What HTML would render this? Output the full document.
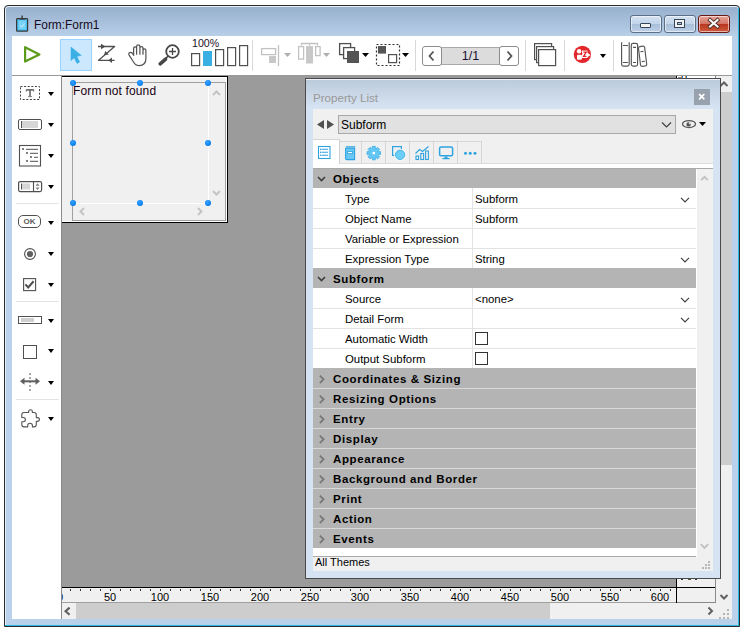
<!DOCTYPE html>
<html><head><meta charset="utf-8">
<style>
*{margin:0;padding:0;box-sizing:border-box}
html,body{width:748px;height:633px;overflow:hidden;background:#fff;font-family:"Liberation Sans",sans-serif;color:#000}
.a{position:absolute}
#win{left:4px;top:5px;width:736px;height:622px;border:1px solid #2b2b2b;border-radius:4px 4px 0 0;background:#b9d1ea;box-shadow:inset 1px 1px 0 #e8eef6}
#title{left:6px;top:7px;width:732px;height:29px;border-radius:3px 3px 0 0;background:linear-gradient(#97b0cd,#b8cfe8)}
#cyanR{left:738px;top:8px;width:1px;height:618px;background:#29b8e6}
#cyanB{left:5px;top:625px;width:734px;height:1px;background:#29b8e6}
.tbtn{top:15px;width:32px;height:18px;border:1px solid #5b6f86;border-radius:3px;background:linear-gradient(#d4e2f2 0%,#c2d4ea 50%,#a9bfd9 51%,#bcd0e8 100%);box-shadow:inset 0 0 0 1px rgba(255,255,255,.55)}
#toolbar{left:12px;top:36px;width:720px;height:39px;background:#fff}
#tbline{left:12px;top:75px;width:720px;height:1px;background:#9a9a9a}
#palette{left:12px;top:76px;width:49px;height:543px;background:#fff}
#palbr{left:61px;top:76px;width:1px;height:527px;background:#8a8a8a}
#canvas{left:62px;top:76px;width:614px;height:511px;background:#9b9b9b}
.sep{background:#d8d8d8;width:1px;height:31px;top:40px}
.dd{width:0;height:0;border-left:3.75px solid transparent;border-right:3.75px solid transparent;border-top:4px solid #000}
.psep{left:16px;width:43px;height:1px;background:#e3e3e3}
.txt{white-space:nowrap;line-height:1}
</style></head><body>
<div class="a" id="win"></div>
<div class="a" id="title"></div>
<div class="a" id="cyanR"></div>
<div class="a" id="cyanB"></div>
<!-- title icon -->
<svg class="a" style="left:15px;top:15px" width="15" height="17"><rect x="1.6" y="3.6" width="11" height="12.6" rx="0.8" fill="#47bdf2" stroke="#3a3a3a" stroke-width="1.2"/><rect x="3.5" y="5.5" width="7.2" height="8.8" fill="#79d2f7"/><path d="M4.3 3.8 L9.9 3.8" stroke="#3a3a3a" stroke-width="1.6"/><path d="M7.1 0.5 L7.1 3.5" stroke="#3a3a3a" stroke-width="1.4"/><path d="M4.8 10.2 L6.6 12 L9.6 8.6" fill="none" stroke="#d8f2fc" stroke-width="0.9"/></svg>
<div class="a txt" style="left:34px;top:20px;font-size:11.9px;color:#1a0a1e">Form:Form1</div>
<div class="a tbtn" style="left:630px"></div>
<div class="a tbtn" style="left:664px"></div>
<div class="a tbtn" style="left:698px;border-color:#6a1a14;background:linear-gradient(#e8a496 0%,#d27565 50%,#b9361f 51%,#cf5b3e 100%)"></div>
<div class="a" style="left:640px;top:23px;width:11px;height:5px;background:#f4f4f4;border:1px solid #34465a;border-radius:1px"></div>
<svg class="a" style="left:673px;top:18px" width="13" height="11"><rect x="1.5" y="1.5" width="10" height="8" fill="#f2f2f2" stroke="#34465a" stroke-width="1"/><rect x="4.5" y="4.5" width="4" height="2" fill="#b8c8da" stroke="#34465a" stroke-width="1"/></svg>
<svg class="a" style="left:706px;top:17px" width="16" height="12"><path d="M4 3 L11.5 9.5 M11.5 3 L4 9.5" stroke="#4a2a24" stroke-width="3.8" stroke-linecap="square"/><path d="M4 3 L11.5 9.5 M11.5 3 L4 9.5" stroke="#fafafa" stroke-width="2.2" stroke-linecap="square"/></svg>

<div class="a" id="toolbar"></div>
<div class="a" id="tbline"></div>

<!-- toolbar icons -->
<svg class="a" style="left:20px;top:42px" width="24" height="25"><path d="M5.1 5.2 L19.4 12.4 L5.1 19.6 Z" fill="none" stroke="#5b9a1a" stroke-width="2.2" stroke-linejoin="round"/></svg>
<div class="a" style="left:60px;top:39px;width:32px;height:32px;background:#cce8ff;border:1px solid #99d1ff"></div>
<svg class="a" style="left:60px;top:39px" width="32" height="32"><path d="M11 8 L21.3 16.5 L16.8 17.3 L19.6 23 L17 24.4 L14.2 18.7 L11 21.6 Z" fill="#3cb0e4" stroke="#3cb0e4" stroke-width="0.6" stroke-linejoin="round"/></svg>
<svg class="a" style="left:96px;top:42px" width="22" height="22"><g stroke="#505050" stroke-width="1.3" fill="none" stroke-linejoin="round"><path d="M2 4.5 L18.6 4.5 L2.6 18.3 L18.6 18.3"/></g><g fill="#505050"><path d="M5 1.8 L9.5 4.5 L5 7.2 Z"/><path d="M16 15.6 L12.3 18.3 L16 21 Z"/><path d="M8 13.3 L9.2 8.9 L12.9 12.5 Z"/></g></svg>
<svg class="a" style="left:127px;top:42px" width="22" height="26"><path d="M6.6 13 L6.6 6.3 Q6.6 4.8 8.1 4.8 Q9.6 4.8 9.6 6.3 L9.6 12.2 M9.6 6.3 L9.6 4.4 Q9.6 2.9 11.25 2.9 Q12.9 2.9 12.9 4.4 L12.9 12.2 M12.9 6 Q12.9 4.6 14.45 4.6 Q16 4.6 16 6 L16 12.2 M16 8.4 Q16 6.9 17.45 6.9 Q18.9 6.9 18.9 8.4 L18.9 16.5 Q18.9 23.5 12.2 23.6 Q8.5 23.6 6.5 20 L2.0 12.8 Q1.3 11.2 2.8 10.6 Q4.4 10.0 5.6 11.6 L6.8 13.3" fill="none" stroke="#555" stroke-width="1.25" stroke-linejoin="round" stroke-linecap="round"/></svg>
<svg class="a" style="left:156px;top:42px" width="28" height="26"><circle cx="16.5" cy="9.5" r="6.3" fill="none" stroke="#474747" stroke-width="1.8"/><path d="M16.5 6 L16.5 13 M13 9.5 L20 9.5" stroke="#474747" stroke-width="1.3"/><path d="M12.4 13.8 L9 17" stroke="#474747" stroke-width="1.6"/><path d="M9.6 17.2 L4.2 21.9" stroke="#474747" stroke-width="3.6" stroke-linecap="round"/></svg>
<div class="a txt" style="left:192px;top:38px;font-size:10.6px;color:#1c1028">100%</div>
<svg class="a" style="left:190px;top:44px" width="60" height="23"><g fill="none" stroke="#505050" stroke-width="1.2"><rect x="1.6" y="9.6" width="8" height="12"/><rect x="25.6" y="5.6" width="8" height="16"/><rect x="37.6" y="3.6" width="8" height="18"/><rect x="49.6" y="1.6" width="8" height="20"/></g><rect x="13" y="7" width="9" height="15" fill="#3aafe3"/></svg>
<div class="a sep" style="left:252px"></div>
<svg class="a" style="left:258px;top:42px" width="36" height="26"><rect x="3.6" y="6.6" width="14" height="6" fill="none" stroke="#c2c2c2" stroke-width="1.3"/><rect x="11" y="14" width="7" height="7" fill="#c8c8c8"/><path d="M20.5 3 L20.5 24" stroke="#c2c2c2" stroke-width="1.3"/><path d="M26 11 L33 11 L29.5 15 Z" fill="#b0b0b0"/></svg>
<svg class="a" style="left:296px;top:40px" width="38" height="28"><g fill="none" stroke="#c2c2c2" stroke-width="1.3"><path d="M5.5 5.5 L5.5 3.5 L21.5 3.5 L21.5 5.5 M13.5 3.5 L13.5 5.5"/><rect x="2.6" y="6.6" width="5" height="12.5"/><rect x="19.6" y="6.6" width="4.5" height="9"/></g><rect x="10" y="6" width="7" height="17.5" fill="#c8c8c8"/><path d="M27 13 L34 13 L30.5 17 Z" fill="#b0b0b0"/></svg>
<svg class="a" style="left:336px;top:40px" width="36" height="26"><g fill="#fff" stroke="#505050" stroke-width="1.3"><rect x="3.6" y="3.6" width="11" height="11"/><rect x="7.6" y="7.6" width="11" height="11"/></g><rect x="11" y="11" width="12" height="12" fill="#555"/><path d="M26 13 L33 13 L29.5 17 Z" fill="#000"/></svg>
<svg class="a" style="left:374px;top:42px" width="38" height="26"><rect x="2.5" y="2.5" width="23" height="21" fill="none" stroke="#303030" stroke-width="1.2" stroke-dasharray="2 2"/><rect x="4" y="4" width="8" height="7.6" fill="#555"/><rect x="14.6" y="12.6" width="8" height="8" fill="#fff" stroke="#505050" stroke-width="1.2"/><path d="M28 11 L35 11 L31.5 15 Z" fill="#000"/></svg>
<div class="a sep" style="left:415px"></div>
<div class="a" style="left:422px;top:46px;width:20px;height:20px;border:1px solid #8c8c8c;border-radius:3px;background:#fff;z-index:2"></div>
<div class="a" style="left:441px;top:47px;width:59px;height:18px;background:#dcdcdc;border:1px solid #a9a9a9"></div>
<div class="a" style="left:499px;top:46px;width:20px;height:20px;border:1px solid #8c8c8c;border-radius:3px;background:#fff;z-index:2"></div>
<svg class="a" style="left:422px;top:46px;z-index:3" width="97" height="20"><path d="M11.5 5.5 L7.5 10 L11.5 14.5" fill="none" stroke="#555" stroke-width="1.8"/><path d="M85.5 5.5 L89.5 10 L85.5 14.5" fill="none" stroke="#555" stroke-width="1.8"/></svg>
<div class="a txt" style="left:441px;top:50px;width:59px;text-align:center;font-size:12.5px;color:#1a1030">1/1</div>
<div class="a sep" style="left:525px"></div>
<svg class="a" style="left:530px;top:40px" width="30" height="30"><g fill="#fff" stroke="#505050" stroke-width="1.2"><rect x="4.6" y="3.6" width="17" height="16"/><rect x="6.6" y="6.6" width="17" height="16"/><rect x="8.6" y="9.6" width="17" height="16"/></g></svg>
<div class="a sep" style="left:564px"></div>
<svg class="a" style="left:572px;top:44px" width="22" height="22"><circle cx="10.4" cy="10.4" r="8.6" fill="#e3262c"/><g fill="#fff"><circle cx="7.1" cy="7.3" r="2.2"/><rect x="5" y="10.8" width="4.9" height="4.9" rx="1"/><rect x="10" y="6.6" width="5.4" height="7.4"/><path d="M15 8.6 L18.6 11 L15 13.4 Z"/></g><path d="M11.3 8.2 L14.2 8.2 L11.6 12.4 L14.5 12.4" fill="none" stroke="#e3262c" stroke-width="1.3"/><path d="M8.6 9.8 L10.6 9.8" stroke="#e3262c" stroke-width="1"/></svg>
<div class="a dd" style="left:600px;top:54px"></div>
<div class="a sep" style="left:613px"></div>
<svg class="a" style="left:618px;top:40px" width="34" height="28"><g fill="none" stroke="#555" stroke-width="1.15"><path d="M3.6 2.3 L3.6 24.3 Q3.6 26.1 5.4 26.1 L9.4 26.1 Q11.2 26.1 11.2 24.3 L11.2 2.3"/><path d="M4.9 5.5 L9.9 5.5 M4.9 22.5 L9.9 22.5"/><rect x="13.3" y="3.3" width="6.3" height="22.8" rx="1.8"/><path d="M15 7.4 L18 7.4 M15 22.5 L18 22.5"/><g transform="translate(24.6 16.3) rotate(-7)"><rect x="-3.1" y="-10" width="6.2" height="20" rx="1.6"/><path d="M-1.6 -4.8 L1.4 -4.8 M-1.4 5.2 L1.6 5.2"/></g></g></svg>

<div class="a" id="palette"></div>

<!-- palette icons -->
<svg class="a" style="left:18px;top:84px" width="26" height="18"><rect x="2.5" y="2.5" width="19" height="13" fill="none" stroke="#404040" stroke-width="1" stroke-dasharray="2 1.6"/></svg>
<svg class="a" style="left:24px;top:88px" width="12" height="10"><path d="M2.3 3.6 L2.3 1.5 L9.7 1.5 L9.7 3.6" fill="none" stroke="#6e6e6e" stroke-width="1"/><path d="M2.3 2 L9.7 2" stroke="#6e6e6e" stroke-width="1.4"/><path d="M6 2 L6 8.6" stroke="#666" stroke-width="1.6"/><path d="M4 8.6 L8 8.6" stroke="#777" stroke-width="0.9"/></svg>
<div class="a dd" style="left:48px;top:92px"></div>
<div class="a" style="left:18px;top:119px;width:24px;height:11px;border:1.3px solid #505050;border-radius:2px"></div>
<div class="a" style="left:22px;top:121px;width:16px;height:7px;background:#d6d6d6"></div>
<div class="a" style="left:21px;top:121px;width:1px;height:7px;background:#555"></div>
<div class="a dd" style="left:48px;top:123px"></div>
<svg class="a" style="left:18px;top:144px" width="24" height="23"><rect x="1.5" y="1.5" width="21" height="20.5" fill="none" stroke="#505050" stroke-width="1.1"/><g fill="#808080"><rect x="4" y="4" width="2" height="2"/><rect x="8" y="8" width="2" height="2"/><rect x="12" y="12" width="2" height="2"/><rect x="8" y="16" width="2" height="2"/></g><g stroke="#505050" stroke-width="1"><path d="M8 5.3 L20 5.3 M12 9.3 L20 9.3 M16 13.3 L20 13.3 M12 17.3 L20 17.3"/></g></svg>
<div class="a dd" style="left:48px;top:154px"></div>
<svg class="a" style="left:17px;top:180px" width="26" height="13"><rect x="1.6" y="1.6" width="23" height="10" rx="1.5" fill="none" stroke="#505050" stroke-width="1.2"/><rect x="5" y="3.5" width="8" height="6" fill="#d6d6d6"/><path d="M4.5 3.5 L4.5 9.5" stroke="#555" stroke-width="1"/><path d="M16.5 1.6 L16.5 11.6" stroke="#505050" stroke-width="1.1"/><path d="M18.5 5.8 L20.5 3.3 L22.5 5.8 Z M18.5 7.5 L22.5 7.5 L20.5 10 Z" fill="#808080"/></svg>
<div class="a dd" style="left:48px;top:185px"></div>
<div class="a psep" style="top:203px"></div>
<div class="a" style="left:18px;top:215px;width:23px;height:13px;border:1.2px solid #505050;border-radius:5px"></div>
<div class="a txt" style="left:18px;top:217.5px;width:23px;text-align:center;font-size:8px;font-weight:bold;color:#5a5a5a">OK</div>
<div class="a dd" style="left:48px;top:221px"></div>
<svg class="a" style="left:23px;top:247px" width="14" height="14"><circle cx="7" cy="7" r="5.4" fill="none" stroke="#505050" stroke-width="1.1"/><circle cx="7" cy="7" r="3.1" fill="#606060"/></svg>
<div class="a dd" style="left:48px;top:252px"></div>
<svg class="a" style="left:22px;top:277px" width="15" height="15"><rect x="1.6" y="1.6" width="12" height="12" fill="none" stroke="#505050" stroke-width="1.1"/><path d="M3.4 7.4 L6.2 10.4 L11.6 4.3" fill="none" stroke="#505050" stroke-width="2.1"/></svg>
<div class="a dd" style="left:48px;top:283px"></div>
<div class="a psep" style="top:301px"></div>
<div class="a" style="left:18px;top:316px;width:24px;height:8px;border:1.2px solid #505050"></div>
<div class="a" style="left:21px;top:318px;width:13px;height:4px;background:#d0d0d0"></div>
<div class="a dd" style="left:48px;top:319px"></div>
<div class="a" style="left:23px;top:345px;width:14px;height:14px;border:1.2px solid #505050"></div>
<div class="a dd" style="left:48px;top:349px"></div>
<svg class="a" style="left:18px;top:372px" width="24" height="22"><path d="M12 1 L12 21" stroke="#505050" stroke-width="1" stroke-dasharray="2 2"/><path d="M4 9.3 L20 9.3" stroke="#606060" stroke-width="2"/><path d="M2 9.3 L6.5 5.8 L6.5 12.8 Z M22 9.3 L17.5 5.8 L17.5 12.8 Z" fill="#606060"/></svg>
<div class="a dd" style="left:48px;top:381px"></div>
<div class="a psep" style="top:399px"></div>
<svg class="a" style="left:19px;top:407px" width="23" height="23"><path d="M5 5.5 L9.6 5.5 L9.6 4.8 Q9.6 2.8 11.5 2.8 Q13.4 2.8 13.4 4.8 L13.4 5.5 L15 5.5 Q17.3 5.5 17.3 7.8 L17.3 10.6 L18.3 10.6 Q20.4 10.6 20.4 12.5 Q20.4 14.4 18.3 14.4 L17.3 14.4 L17.3 17.6 Q17.3 19.9 15 19.9 L13.4 19.9 L13.4 18.4 Q13.4 16.2 11 16.2 Q8.7 16.2 8.7 18.4 L8.7 19.9 L5 19.9 Q2.8 19.9 2.8 17.6 L2.8 14.8 L4.3 14.8 Q6.4 14.8 6.4 12.6 Q6.4 10.5 4.3 10.5 L2.8 10.5 L2.8 7.8 Q2.8 5.5 5 5.5 Z" fill="none" stroke="#555" stroke-width="1.1" stroke-linejoin="round"/></svg>
<div class="a dd" style="left:48px;top:417px"></div>

<div class="a" id="canvas"></div>

<!-- horizontal ruler -->
<div class="a" style="left:61px;top:587px;width:615px;height:1px;background:#000"></div>
<div class="a" style="left:62px;top:588px;width:614px;height:14px;background:#f0f0f0;overflow:hidden"></div>
<div class="a" style="left:61px;top:602px;width:615px;height:1px;background:#a0a0a0"></div>
<div class="a" style="left:62px;top:588px;width:614px;height:14px;overflow:hidden">
<div class="a txt" style="left:-17px;top:4px;width:30px;text-align:center;font-size:11px">0</div>
</div>
<div class="a" style="left:70px;top:589px;width:1px;height:2px;background:#333"></div>
<div class="a" style="left:80px;top:589px;width:1px;height:2px;background:#333"></div>
<div class="a" style="left:90px;top:589px;width:1px;height:2px;background:#333"></div>
<div class="a" style="left:100px;top:589px;width:1px;height:2px;background:#333"></div>
<div class="a" style="left:110px;top:589px;width:1px;height:2px;background:#333"></div>
<div class="a" style="left:120px;top:589px;width:1px;height:2px;background:#333"></div>
<div class="a" style="left:130px;top:589px;width:1px;height:2px;background:#333"></div>
<div class="a" style="left:140px;top:589px;width:1px;height:2px;background:#333"></div>
<div class="a" style="left:150px;top:589px;width:1px;height:2px;background:#333"></div>
<div class="a" style="left:160px;top:589px;width:1px;height:2px;background:#333"></div>
<div class="a" style="left:170px;top:589px;width:1px;height:2px;background:#333"></div>
<div class="a" style="left:180px;top:589px;width:1px;height:2px;background:#333"></div>
<div class="a" style="left:190px;top:589px;width:1px;height:2px;background:#333"></div>
<div class="a" style="left:200px;top:589px;width:1px;height:2px;background:#333"></div>
<div class="a" style="left:210px;top:589px;width:1px;height:2px;background:#333"></div>
<div class="a" style="left:220px;top:589px;width:1px;height:2px;background:#333"></div>
<div class="a" style="left:230px;top:589px;width:1px;height:2px;background:#333"></div>
<div class="a" style="left:240px;top:589px;width:1px;height:2px;background:#333"></div>
<div class="a" style="left:250px;top:589px;width:1px;height:2px;background:#333"></div>
<div class="a" style="left:260px;top:589px;width:1px;height:2px;background:#333"></div>
<div class="a" style="left:270px;top:589px;width:1px;height:2px;background:#333"></div>
<div class="a" style="left:280px;top:589px;width:1px;height:2px;background:#333"></div>
<div class="a" style="left:290px;top:589px;width:1px;height:2px;background:#333"></div>
<div class="a" style="left:300px;top:589px;width:1px;height:2px;background:#333"></div>
<div class="a" style="left:310px;top:589px;width:1px;height:2px;background:#333"></div>
<div class="a" style="left:320px;top:589px;width:1px;height:2px;background:#333"></div>
<div class="a" style="left:330px;top:589px;width:1px;height:2px;background:#333"></div>
<div class="a" style="left:340px;top:589px;width:1px;height:2px;background:#333"></div>
<div class="a" style="left:350px;top:589px;width:1px;height:2px;background:#333"></div>
<div class="a" style="left:360px;top:589px;width:1px;height:2px;background:#333"></div>
<div class="a" style="left:370px;top:589px;width:1px;height:2px;background:#333"></div>
<div class="a" style="left:380px;top:589px;width:1px;height:2px;background:#333"></div>
<div class="a" style="left:390px;top:589px;width:1px;height:2px;background:#333"></div>
<div class="a" style="left:400px;top:589px;width:1px;height:2px;background:#333"></div>
<div class="a" style="left:410px;top:589px;width:1px;height:2px;background:#333"></div>
<div class="a" style="left:420px;top:589px;width:1px;height:2px;background:#333"></div>
<div class="a" style="left:430px;top:589px;width:1px;height:2px;background:#333"></div>
<div class="a" style="left:440px;top:589px;width:1px;height:2px;background:#333"></div>
<div class="a" style="left:450px;top:589px;width:1px;height:2px;background:#333"></div>
<div class="a" style="left:460px;top:589px;width:1px;height:2px;background:#333"></div>
<div class="a" style="left:470px;top:589px;width:1px;height:2px;background:#333"></div>
<div class="a" style="left:480px;top:589px;width:1px;height:2px;background:#333"></div>
<div class="a" style="left:490px;top:589px;width:1px;height:2px;background:#333"></div>
<div class="a" style="left:500px;top:589px;width:1px;height:2px;background:#333"></div>
<div class="a" style="left:510px;top:589px;width:1px;height:2px;background:#333"></div>
<div class="a" style="left:520px;top:589px;width:1px;height:2px;background:#333"></div>
<div class="a" style="left:530px;top:589px;width:1px;height:2px;background:#333"></div>
<div class="a" style="left:540px;top:589px;width:1px;height:2px;background:#333"></div>
<div class="a" style="left:550px;top:589px;width:1px;height:2px;background:#333"></div>
<div class="a" style="left:560px;top:589px;width:1px;height:2px;background:#333"></div>
<div class="a" style="left:570px;top:589px;width:1px;height:2px;background:#333"></div>
<div class="a" style="left:580px;top:589px;width:1px;height:2px;background:#333"></div>
<div class="a" style="left:590px;top:589px;width:1px;height:2px;background:#333"></div>
<div class="a" style="left:600px;top:589px;width:1px;height:2px;background:#333"></div>
<div class="a" style="left:610px;top:589px;width:1px;height:2px;background:#333"></div>
<div class="a" style="left:620px;top:589px;width:1px;height:2px;background:#333"></div>
<div class="a" style="left:630px;top:589px;width:1px;height:2px;background:#333"></div>
<div class="a" style="left:640px;top:589px;width:1px;height:2px;background:#333"></div>
<div class="a" style="left:650px;top:589px;width:1px;height:2px;background:#333"></div>
<div class="a" style="left:660px;top:589px;width:1px;height:2px;background:#333"></div>
<div class="a" style="left:670px;top:589px;width:1px;height:2px;background:#333"></div>
<div class="a txt" style="left:95px;top:592px;width:30px;text-align:center;font-size:11px;color:#000">50</div>
<div class="a txt" style="left:145px;top:592px;width:30px;text-align:center;font-size:11px;color:#000">100</div>
<div class="a txt" style="left:195px;top:592px;width:30px;text-align:center;font-size:11px;color:#000">150</div>
<div class="a txt" style="left:245px;top:592px;width:30px;text-align:center;font-size:11px;color:#000">200</div>
<div class="a txt" style="left:295px;top:592px;width:30px;text-align:center;font-size:11px;color:#000">250</div>
<div class="a txt" style="left:345px;top:592px;width:30px;text-align:center;font-size:11px;color:#000">300</div>
<div class="a txt" style="left:395px;top:592px;width:30px;text-align:center;font-size:11px;color:#000">350</div>
<div class="a txt" style="left:445px;top:592px;width:30px;text-align:center;font-size:11px;color:#000">400</div>
<div class="a txt" style="left:495px;top:592px;width:30px;text-align:center;font-size:11px;color:#000">450</div>
<div class="a txt" style="left:545px;top:592px;width:30px;text-align:center;font-size:11px;color:#000">500</div>
<div class="a txt" style="left:595px;top:592px;width:30px;text-align:center;font-size:11px;color:#000">550</div>
<div class="a txt" style="left:645px;top:592px;width:30px;text-align:center;font-size:11px;color:#000">600</div>
<!-- corner box / vertical ruler -->
<div class="a" style="left:676px;top:76px;width:1px;height:527px;background:#000"></div>
<div class="a" style="left:677px;top:76px;width:38px;height:511px;background:#f0f0f0"></div><div class="a" style="left:677px;top:76px;width:38px;height:2px;background:#fff"></div><div class="a" style="left:681px;top:76px;width:1px;height:2px;background:#e09a3a"></div><div class="a" style="left:682px;top:76px;width:1px;height:2px;background:#1a74cc"></div><div class="a" style="left:685px;top:76px;width:1px;height:2px;background:#e09a3a"></div><div class="a" style="left:686px;top:76px;width:1px;height:2px;background:#1a74cc"></div><div class="a" style="left:678px;top:77px;width:3px;height:1px;background:#8a8a8a"></div><div class="a" style="left:681px;top:579px;width:2px;height:1px;background:#333"></div><div class="a" style="left:688px;top:579px;width:3px;height:1px;background:#553"></div><div class="a" style="left:695px;top:579px;width:2px;height:1px;background:#335"></div>
<div class="a" style="left:677px;top:588px;width:38px;height:14px;background:#f0f0f0"></div>
<div class="a" style="left:676px;top:587px;width:40px;height:1px;background:#000"></div>
<div class="a" style="left:677px;top:602px;width:39px;height:1px;background:#8a8a8a"></div>
<div class="a" style="left:715px;top:76px;width:1px;height:527px;background:#8a8a8a"></div>
<!-- vertical scrollbar -->
<div class="a" style="left:716px;top:76px;width:16px;height:527px;background:#f0f0f0"></div>
<div class="a" style="left:716px;top:92px;width:16px;height:373px;background:#cdcdcd"></div>
<svg class="a" style="left:716px;top:76px" width="16" height="16"><path d="M4.5 10 L8 6.5 L11.5 10" fill="none" stroke="#606060" stroke-width="2"/></svg>
<svg class="a" style="left:716px;top:589px" width="16" height="16"><path d="M4.5 6 L8 9.5 L11.5 6" fill="none" stroke="#606060" stroke-width="2"/></svg>
<!-- horizontal scrollbar -->
<div class="a" style="left:62px;top:603px;width:670px;height:16px;background:#f0f0f0"></div>
<div class="a" style="left:76px;top:603px;width:474px;height:16px;background:#cdcdcd"></div>
<svg class="a" style="left:60px;top:603px" width="16" height="16"><path d="M9.6 4.6 L5.6 8.2 L9.6 11.8" fill="none" stroke="#606060" stroke-width="2.2"/></svg>
<svg class="a" style="left:702px;top:603px" width="16" height="16"><path d="M6.5 4.5 L10 8 L6.5 11.5" fill="none" stroke="#606060" stroke-width="2"/></svg>
<svg class="a" style="left:716px;top:603px" width="16" height="16"><g fill="#b4b4b4"><rect x="11" y="6" width="2" height="2"/><rect x="7" y="10" width="2" height="2"/><rect x="11" y="10" width="2" height="2"/><rect x="3" y="14" width="2" height="2"/><rect x="7" y="14" width="2" height="2"/><rect x="11" y="14" width="2" height="2"/></g></svg>

<!-- form box -->
<div class="a" style="left:61px;top:76px;width:167px;height:147px;background:#000"></div>
<div class="a" style="left:62px;top:77px;width:165px;height:145px;background:#fff"></div>
<div class="a" style="left:62px;top:78px;width:164px;height:143px;background:#f0f0f0"></div>
<div class="a" style="left:72px;top:82px;width:154px;height:139px;border:1px solid #a0a0a0"></div>
<div class="a" style="left:208px;top:83px;width:1px;height:120px;background:#fff"></div>
<div class="a" style="left:73px;top:203px;width:136px;height:1px;background:#fff"></div>
<svg class="a" style="left:208px;top:83px" width="17" height="120"><path d="M5 12 L8.5 8.5 L12 12" fill="none" stroke="#c4c4c4" stroke-width="2"/><path d="M5 108 L8.5 111.5 L12 108" fill="none" stroke="#c4c4c4" stroke-width="2"/></svg>
<svg class="a" style="left:73px;top:204px" width="135" height="16"><path d="M11 4 L7.5 7.5 L11 11" fill="none" stroke="#c4c4c4" stroke-width="2"/><path d="M125 4 L128.5 7.5 L125 11" fill="none" stroke="#c4c4c4" stroke-width="2"/></svg>
<div class="a txt" style="left:73px;top:85px;font-size:12px;letter-spacing:0.13px;color:#1a0010">Form not found</div>
<div class="a" style="left:70px;top:80px;width:6px;height:6px;border-radius:50%;background:radial-gradient(circle at 40% 35%,#3aa0ff,#0a84f0 60%,#0a5cb8)"></div>
<div class="a" style="left:137px;top:80px;width:6px;height:6px;border-radius:50%;background:radial-gradient(circle at 40% 35%,#3aa0ff,#0a84f0 60%,#0a5cb8)"></div>
<div class="a" style="left:205px;top:80px;width:6px;height:6px;border-radius:50%;background:radial-gradient(circle at 40% 35%,#3aa0ff,#0a84f0 60%,#0a5cb8)"></div>
<div class="a" style="left:70px;top:140px;width:6px;height:6px;border-radius:50%;background:radial-gradient(circle at 40% 35%,#3aa0ff,#0a84f0 60%,#0a5cb8)"></div>
<div class="a" style="left:205px;top:140px;width:6px;height:6px;border-radius:50%;background:radial-gradient(circle at 40% 35%,#3aa0ff,#0a84f0 60%,#0a5cb8)"></div>
<div class="a" style="left:70px;top:200px;width:6px;height:6px;border-radius:50%;background:radial-gradient(circle at 40% 35%,#3aa0ff,#0a84f0 60%,#0a5cb8)"></div>
<div class="a" style="left:137px;top:200px;width:6px;height:6px;border-radius:50%;background:radial-gradient(circle at 40% 35%,#3aa0ff,#0a84f0 60%,#0a5cb8)"></div>
<div class="a" style="left:205px;top:200px;width:6px;height:6px;border-radius:50%;background:radial-gradient(circle at 40% 35%,#3aa0ff,#0a84f0 60%,#0a5cb8)"></div>

<div class="a" id="palbr2" style="left:61px;top:76px;width:1px;height:543px;background:#8a8a8a"></div>



<!-- property list window -->
<div class="a" style="left:305px;top:78px;width:416px;height:501px;background:#d6e3f2;border:1px solid #4a4a4a"></div>
<div class="a" style="left:306px;top:79px;width:414px;height:1px;background:#eef3f9"></div>
<div class="a" style="left:306px;top:80px;width:414px;height:29px;background:linear-gradient(#bccbdb,#d7e4f3)"></div>
<div class="a txt" style="left:313px;top:92px;font-size:11.6px;color:#9a9898">Property List</div>
<div class="a" style="left:694px;top:89px;width:16px;height:16px;background:#98a2ae"></div>
<svg class="a" style="left:694px;top:89px" width="16" height="16"><path d="M5.7 5.7 L9.7 9.7 M9.7 5.7 L5.7 9.7" stroke="#fff" stroke-width="1.7" stroke-linecap="square"/></svg>
<div class="a" style="left:313px;top:109px;width:400px;height:462px;background:#f0f0f0"></div>
<svg class="a" style="left:316px;top:119px" width="20" height="11"><path d="M1 5.5 L8 1 L8 10 Z" fill="#505050"/><path d="M11 1 L18 5.5 L11 10 Z" fill="#505050"/></svg>
<div class="a" style="left:338px;top:115px;width:338px;height:19px;background:#e1e1e1;border:1px solid #a8a8a8"></div>
<div class="a txt" style="left:341px;top:119px;font-size:12px;color:#000">Subform</div>
<svg class="a" style="left:661px;top:121px" width="11" height="8"><path d="M1 1.5 L5.5 6 L10 1.5" fill="none" stroke="#404040" stroke-width="1.2"/></svg>
<svg class="a" style="left:681px;top:119px" width="27" height="11"><ellipse cx="8" cy="5" rx="6.5" ry="3.5" fill="none" stroke="#555" stroke-width="1.25"/><circle cx="7.6" cy="5.4" r="2.2" fill="#555"/><circle cx="8.7" cy="4.3" r="0.9" fill="#f0f0f0"/><path d="M18 3 L25 3 L21.5 7 Z" fill="#000"/></svg>
<div class="a" style="left:313px;top:164px;width:400px;height:4px;background:#fff"></div>
<div class="a" style="left:339px;top:141px;width:23px;height:23px;background:#f0f0f0;border:1px solid #d6d6d6"></div>
<div class="a" style="left:361px;top:141px;width:25px;height:23px;background:#f0f0f0;border:1px solid #d6d6d6"></div>
<div class="a" style="left:385px;top:141px;width:25px;height:23px;background:#f0f0f0;border:1px solid #d6d6d6"></div>
<div class="a" style="left:409px;top:141px;width:25px;height:23px;background:#f0f0f0;border:1px solid #d6d6d6"></div>
<div class="a" style="left:433px;top:141px;width:25px;height:23px;background:#f0f0f0;border:1px solid #d6d6d6"></div>
<div class="a" style="left:457px;top:141px;width:25px;height:23px;background:#f0f0f0;border:1px solid #d6d6d6"></div>
<div class="a" style="left:339px;top:163px;width:374px;height:1px;background:#dcdcdc"></div>

<div class="a" style="left:313px;top:139px;width:27px;height:29px;background:#fff;border-right:1px solid #d0d0d0;border-top:1px solid #d6d6d6"></div><div class="a" style="left:313px;top:164px;width:27px;height:4px;background:#fff"></div>

<!-- tab icons -->
<svg class="a" style="left:313px;top:140px" width="170" height="24"><g fill="none" stroke="#2ea3df" stroke-width="1.1">
<rect x="5.5" y="6.5" width="11.5" height="12"/>
<path d="M9 9.3 L15 9.3 M9 12.3 L15 12.3 M9 15.3 L15 15.3"/>
</g><g fill="#2ea3df"><rect x="7" y="8.6" width="1.4" height="1.4"/><rect x="7" y="11.6" width="1.4" height="1.4"/><rect x="7" y="14.6" width="1.4" height="1.4"/></g>
<path d="M33 6.9 L42.2 6.9" stroke="#2ea3df" stroke-width="1.3"/><path d="M32.6 8.3 L41.6 8.3 L41.6 19.6 L33.8 19.6 Q32.6 19.6 32.6 18.4 Z" fill="#6ac9f4" stroke="#2ea3df" stroke-width="1.1"/><rect x="34.6" y="11.4" width="4.8" height="2.3" fill="#fff" stroke="#2ea3df" stroke-width="0.9"/>
<g transform="translate(60.8,13.1)"><path d="M4.98 -1.51 L6.74 -1.48 L6.74 1.48 L4.98 1.51 L4.80 1.99 L4.59 2.45 L5.81 3.72 L3.72 5.81 L2.45 4.59 L1.99 4.80 L1.51 4.98 L1.48 6.74 L-1.48 6.74 L-1.51 4.98 L-1.99 4.80 L-2.45 4.59 L-3.72 5.81 L-5.81 3.72 L-4.59 2.45 L-4.80 1.99 L-4.98 1.51 L-6.74 1.48 L-6.74 -1.48 L-4.98 -1.51 L-4.80 -1.99 L-4.59 -2.45 L-5.81 -3.72 L-3.72 -5.81 L-2.45 -4.59 L-1.99 -4.80 L-1.51 -4.98 L-1.48 -6.74 L1.48 -6.74 L1.51 -4.98 L1.99 -4.80 L2.45 -4.59 L3.72 -5.81 L5.81 -3.72 L4.59 -2.45 L4.80 -1.99 Z" fill="#64c6f3" stroke="#3aaee6" stroke-width="0.8" stroke-linejoin="round"/><circle r="1.4" fill="#fff"/></g>
<rect x="79.6" y="6.6" width="8.8" height="8.8" fill="none" stroke="#2ea3df" stroke-width="1.2"/><circle cx="87.1" cy="14.8" r="6" fill="#fafafa"/><circle cx="87.1" cy="14.8" r="4.7" fill="#6ccdf7" stroke="#3ab0e6" stroke-width="0.9"/>
<g fill="none" stroke="#2ea3df" stroke-width="1.1"><rect x="103" y="16" width="2.6" height="3.5"/><rect x="107.8" y="13.5" width="2.8" height="6"/><rect x="112.6" y="11" width="2.8" height="8.5"/><path d="M102.5 13.5 L106.5 9.5 L109.5 11.5 L115.5 6.5"/></g>
<rect x="126.6" y="7.1" width="13" height="8.6" rx="1.3" fill="none" stroke="#2ea3df" stroke-width="1.5"/><path d="M131.5 16.5 L134.5 16.5 L134.5 18 L136.5 18 L136.5 19.3 L129.5 19.3 L129.5 18 L131.5 18 Z" fill="#2ea3df"/>
<g fill="#2ea3df"><circle cx="152.5" cy="13.3" r="1.5"/><circle cx="157.2" cy="13.3" r="1.5"/><circle cx="162" cy="13.3" r="1.5"/></g>
</svg>
<div class="a" style="left:313px;top:168px;width:383px;height:388px;background:#fff"></div>
<!--ROWS-->
<div class="a" style="left:313px;top:168px;width:383px;height:20px;background:#b4b4b4"></div>
<svg class="a" style="left:317px;top:176px" width="10" height="7"><path d="M1 1 L4.5 4.5 L8 1" fill="none" stroke="#3c3c3c" stroke-width="1.6"/></svg>
<div class="a txt" style="left:333px;top:174px;font-size:11.5px;letter-spacing:0.62px;font-weight:bold;color:#000">Objects</div>
<div class="a" style="left:472px;top:188px;width:1px;height:20px;background:#e3e3e3"></div>
<div class="a txt" style="left:345px;top:194px;font-size:11.4px">Type</div>
<div class="a txt" style="left:475px;top:194px;font-size:11.4px">Subform</div>
<svg class="a" style="left:680px;top:197px" width="10" height="6"><path d="M1 0.8 L5 4.8 L9 0.8" fill="none" stroke="#404040" stroke-width="1.2"/></svg>
<div class="a" style="left:313px;top:208px;width:383px;height:1px;background:#e3e3e3"></div>
<div class="a" style="left:472px;top:208px;width:1px;height:20px;background:#e3e3e3"></div>
<div class="a txt" style="left:345px;top:214px;font-size:11.4px">Object Name</div>
<div class="a txt" style="left:475px;top:214px;font-size:11.4px">Subform</div>
<div class="a" style="left:313px;top:228px;width:383px;height:1px;background:#e3e3e3"></div>
<div class="a" style="left:472px;top:228px;width:1px;height:20px;background:#e3e3e3"></div>
<div class="a txt" style="left:345px;top:234px;font-size:11.4px">Variable or Expression</div>
<div class="a" style="left:313px;top:248px;width:383px;height:1px;background:#e3e3e3"></div>
<div class="a" style="left:472px;top:248px;width:1px;height:20px;background:#e3e3e3"></div>
<div class="a txt" style="left:345px;top:254px;font-size:11.4px">Expression Type</div>
<div class="a txt" style="left:475px;top:254px;font-size:11.4px">String</div>
<svg class="a" style="left:680px;top:257px" width="10" height="6"><path d="M1 0.8 L5 4.8 L9 0.8" fill="none" stroke="#404040" stroke-width="1.2"/></svg>
<div class="a" style="left:313px;top:268px;width:383px;height:20px;background:#b4b4b4"></div>
<svg class="a" style="left:317px;top:276px" width="10" height="7"><path d="M1 1 L4.5 4.5 L8 1" fill="none" stroke="#3c3c3c" stroke-width="1.6"/></svg>
<div class="a txt" style="left:333px;top:274px;font-size:11.5px;letter-spacing:0.62px;font-weight:bold;color:#000">Subform</div>
<div class="a" style="left:472px;top:288px;width:1px;height:20px;background:#e3e3e3"></div>
<div class="a txt" style="left:345px;top:294px;font-size:11.4px">Source</div>
<div class="a txt" style="left:475px;top:294px;font-size:11.4px">&lt;none&gt;</div>
<svg class="a" style="left:680px;top:297px" width="10" height="6"><path d="M1 0.8 L5 4.8 L9 0.8" fill="none" stroke="#404040" stroke-width="1.2"/></svg>
<div class="a" style="left:313px;top:308px;width:383px;height:1px;background:#e3e3e3"></div>
<div class="a" style="left:472px;top:308px;width:1px;height:20px;background:#e3e3e3"></div>
<div class="a txt" style="left:345px;top:314px;font-size:11.4px">Detail Form</div>
<svg class="a" style="left:680px;top:317px" width="10" height="6"><path d="M1 0.8 L5 4.8 L9 0.8" fill="none" stroke="#404040" stroke-width="1.2"/></svg>
<div class="a" style="left:313px;top:328px;width:383px;height:1px;background:#e3e3e3"></div>
<div class="a" style="left:472px;top:328px;width:1px;height:20px;background:#e3e3e3"></div>
<div class="a txt" style="left:345px;top:334px;font-size:11.4px">Automatic Width</div>
<div class="a" style="left:475px;top:332px;width:13px;height:13px;border:1px solid #333;background:#fff"></div>
<div class="a" style="left:313px;top:348px;width:383px;height:1px;background:#e3e3e3"></div>
<div class="a" style="left:472px;top:348px;width:1px;height:20px;background:#e3e3e3"></div>
<div class="a txt" style="left:345px;top:354px;font-size:11.4px">Output Subform</div>
<div class="a" style="left:475px;top:352px;width:13px;height:13px;border:1px solid #333;background:#fff"></div>
<div class="a" style="left:313px;top:368px;width:383px;height:20px;background:#b4b4b4"></div>
<svg class="a" style="left:318px;top:374px" width="8" height="11"><path d="M1.8 1.6 L5.6 5.3 L1.8 9" fill="none" stroke="#787878" stroke-width="1.8"/></svg>
<div class="a txt" style="left:333px;top:374px;font-size:11.5px;letter-spacing:0.62px;font-weight:bold;color:#000">Coordinates &amp; Sizing</div>
<div class="a" style="left:313px;top:388px;width:383px;height:20px;background:#b4b4b4"></div>
<div class="a" style="left:313px;top:388px;width:383px;height:1px;background:#d8d8d8"></div>
<svg class="a" style="left:318px;top:394px" width="8" height="11"><path d="M1.8 1.6 L5.6 5.3 L1.8 9" fill="none" stroke="#787878" stroke-width="1.8"/></svg>
<div class="a txt" style="left:333px;top:394px;font-size:11.5px;letter-spacing:0.62px;font-weight:bold;color:#000">Resizing Options</div>
<div class="a" style="left:313px;top:408px;width:383px;height:20px;background:#b4b4b4"></div>
<div class="a" style="left:313px;top:408px;width:383px;height:1px;background:#d8d8d8"></div>
<svg class="a" style="left:318px;top:414px" width="8" height="11"><path d="M1.8 1.6 L5.6 5.3 L1.8 9" fill="none" stroke="#787878" stroke-width="1.8"/></svg>
<div class="a txt" style="left:333px;top:414px;font-size:11.5px;letter-spacing:0.62px;font-weight:bold;color:#000">Entry</div>
<div class="a" style="left:313px;top:428px;width:383px;height:20px;background:#b4b4b4"></div>
<div class="a" style="left:313px;top:428px;width:383px;height:1px;background:#d8d8d8"></div>
<svg class="a" style="left:318px;top:434px" width="8" height="11"><path d="M1.8 1.6 L5.6 5.3 L1.8 9" fill="none" stroke="#787878" stroke-width="1.8"/></svg>
<div class="a txt" style="left:333px;top:434px;font-size:11.5px;letter-spacing:0.62px;font-weight:bold;color:#000">Display</div>
<div class="a" style="left:313px;top:448px;width:383px;height:20px;background:#b4b4b4"></div>
<div class="a" style="left:313px;top:448px;width:383px;height:1px;background:#d8d8d8"></div>
<svg class="a" style="left:318px;top:454px" width="8" height="11"><path d="M1.8 1.6 L5.6 5.3 L1.8 9" fill="none" stroke="#787878" stroke-width="1.8"/></svg>
<div class="a txt" style="left:333px;top:454px;font-size:11.5px;letter-spacing:0.62px;font-weight:bold;color:#000">Appearance</div>
<div class="a" style="left:313px;top:468px;width:383px;height:20px;background:#b4b4b4"></div>
<div class="a" style="left:313px;top:468px;width:383px;height:1px;background:#d8d8d8"></div>
<svg class="a" style="left:318px;top:474px" width="8" height="11"><path d="M1.8 1.6 L5.6 5.3 L1.8 9" fill="none" stroke="#787878" stroke-width="1.8"/></svg>
<div class="a txt" style="left:333px;top:474px;font-size:11.5px;letter-spacing:0.62px;font-weight:bold;color:#000">Background and Border</div>
<div class="a" style="left:313px;top:488px;width:383px;height:20px;background:#b4b4b4"></div>
<div class="a" style="left:313px;top:488px;width:383px;height:1px;background:#d8d8d8"></div>
<svg class="a" style="left:318px;top:494px" width="8" height="11"><path d="M1.8 1.6 L5.6 5.3 L1.8 9" fill="none" stroke="#787878" stroke-width="1.8"/></svg>
<div class="a txt" style="left:333px;top:494px;font-size:11.5px;letter-spacing:0.62px;font-weight:bold;color:#000">Print</div>
<div class="a" style="left:313px;top:508px;width:383px;height:20px;background:#b4b4b4"></div>
<div class="a" style="left:313px;top:508px;width:383px;height:1px;background:#d8d8d8"></div>
<svg class="a" style="left:318px;top:514px" width="8" height="11"><path d="M1.8 1.6 L5.6 5.3 L1.8 9" fill="none" stroke="#787878" stroke-width="1.8"/></svg>
<div class="a txt" style="left:333px;top:514px;font-size:11.5px;letter-spacing:0.62px;font-weight:bold;color:#000">Action</div>
<div class="a" style="left:313px;top:528px;width:383px;height:20px;background:#b4b4b4"></div>
<div class="a" style="left:313px;top:528px;width:383px;height:1px;background:#d8d8d8"></div>
<svg class="a" style="left:318px;top:534px" width="8" height="11"><path d="M1.8 1.6 L5.6 5.3 L1.8 9" fill="none" stroke="#787878" stroke-width="1.8"/></svg>
<div class="a txt" style="left:333px;top:534px;font-size:11.5px;letter-spacing:0.62px;font-weight:bold;color:#000">Events</div>
<!--/ROWS-->
<div class="a" style="left:313px;top:556px;width:383px;height:1px;background:#a9a9a9"></div>
<div class="a" style="left:313px;top:557px;width:400px;height:14px;background:#f0f0f0"></div>
<div class="a txt" style="left:315px;top:557px;font-size:11px;color:#000">All Themes</div>
<div class="a" style="left:696px;top:168px;width:17px;height:389px;background:#fff"></div><div class="a" style="left:697px;top:169px;width:16px;height:388px;background:#f0f0f0"></div><div class="a" style="left:313px;top:168px;width:400px;height:1px;background:#a9a9a9"></div>
<svg class="a" style="left:696px;top:168px" width="17" height="389"><path d="M5.2 12.2 L8.5 8.9 L11.8 12.2" fill="none" stroke="#c0c0c0" stroke-width="1.9"/><path d="M4.8 376.2 L8.5 379.9 L12.2 376.2" fill="none" stroke="#c0c0c0" stroke-width="1.9"/></svg>
<svg class="a" style="left:699px;top:557px" width="14" height="14"><g fill="#b8b8b8"><rect x="9" y="4" width="2" height="2"/><rect x="6" y="7" width="2" height="2"/><rect x="9" y="7" width="2" height="2"/><rect x="3" y="10" width="2" height="2"/><rect x="6" y="10" width="2" height="2"/><rect x="9" y="10" width="2" height="2"/></g></svg>
</body></html>
